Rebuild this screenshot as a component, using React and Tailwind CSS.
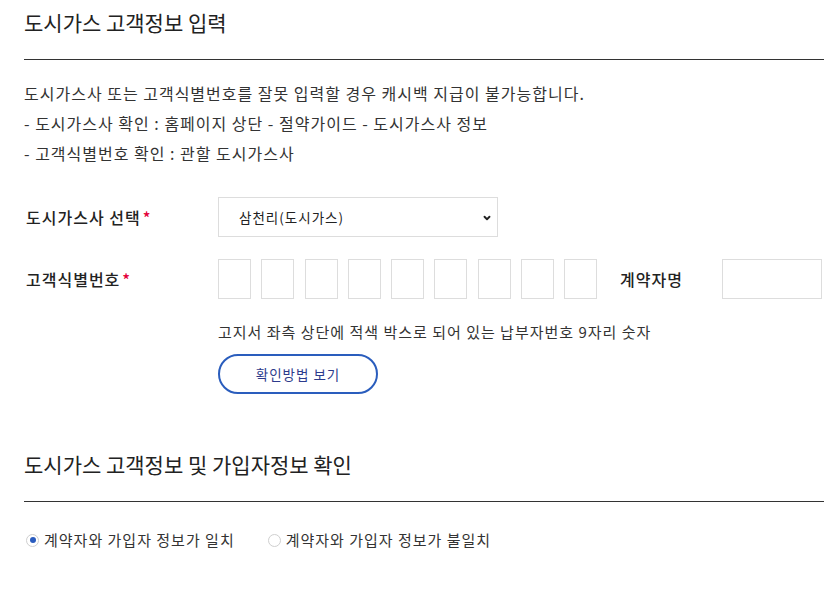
import React from "react";
import { ChevronDown } from "lucide-react";

const font = "font-['Noto_Sans_CJK_KR','Noto_Sans',sans-serif]";

const Label = ({ children, required }) => (
  <div className="w-[194px] shrink-0 pl-[2px] text-[16px] font-medium tracking-[1px] text-[#222]">
    {children}
    {required && <span className="ml-[2px] text-[#e4003a]">*</span>}
  </div>
);

const Radio = ({ checked, children }) => (
  <label className="flex items-center gap-[5px]">
    <span className="flex h-[13px] w-[13px] items-center justify-center rounded-full border border-[#cfcfcf] bg-white">
      {checked && <span className="h-[6px] w-[6px] rounded-full bg-[#2a5cbf]" />}
    </span>
    <span>{children}</span>
  </label>
);

const App = () => {
  const digits = Array.from({ length: 9 });

  return (
    <div className={`${font} w-[836px] bg-white pl-6 pr-3 pb-10 text-[#333]`}>
      {/* 고객정보 입력 */}
      <h2 className="pt-[6px] text-[21px] leading-[32px] text-[#222]">
        도시가스 고객정보 입력
      </h2>
      <hr className="mt-[21px] border-t border-[#333]" />

      <div className="mt-[18px] text-[16px] leading-[30px] tracking-[1px]">
        <p>도시가스사 또는 고객식별번호를 잘못 입력할 경우 캐시백 지급이 불가능합니다.</p>
        <p>- 도시가스사 확인 : 홈페이지 상단 - 절약가이드 - 도시가스사 정보</p>
        <p>- 고객식별번호 확인 : 관할 도시가스사</p>
      </div>

      {/* 도시가스사 선택 */}
      <div className="mt-[29px] flex items-center">
        <Label required>도시가스사 선택</Label>
        <div className="relative flex h-[40px] w-[280px] items-center border border-[#ddd] pl-5 text-[13.5px] tracking-[1px] text-[#222]">
          삼천리(도시가스)
          <ChevronDown className="absolute right-[5px] top-[15px] h-[10px] w-[10px]" strokeWidth={4.5} />
        </div>
      </div>

      {/* 고객식별번호 */}
      <div className="mt-[22px] flex items-center">
        <Label required>고객식별번호</Label>
        <div className="flex gap-[10.25px]">
          {digits.map((_, i) => (
            <div key={i} className="h-[40px] w-[33px] border border-[#ddd]" />
          ))}
        </div>
        <div className="ml-[23px] w-[102px] text-[16px] font-medium tracking-[1px] text-[#222]">계약자명</div>
        <div className="h-[40px] w-[100px] border border-[#ddd]" />
      </div>

      <div className="ml-[194px]">
        <p className="mt-[22px] text-[15px] leading-[22px] tracking-[1px]">
          고지서 좌측 상단에 적색 박스로 되어 있는 납부자번호 9자리 숫자
        </p>
        <button className="mt-[11px] flex h-[40px] w-[160px] items-center justify-center rounded-full border-2 border-[#2a5dbd] text-[13.5px] tracking-[1px] text-[#2d3b8c]">
          확인방법 보기
        </button>
      </div>

      {/* 가입자정보 확인 */}
      <h2 className="mt-[54px] text-[21px] leading-[32px] text-[#222]">
        도시가스 고객정보 및 가입자정보 확인
      </h2>
      <hr className="mt-[21px] border-t border-[#333]" />

      <div className="mt-[27px] flex items-center gap-[33px] pl-[2px] text-[15px] leading-[22px] tracking-[1px]">
        <Radio checked>계약자와 가입자 정보가 일치</Radio>
        <Radio>계약자와 가입자 정보가 불일치</Radio>
      </div>
    </div>
  );
};

export default App;
